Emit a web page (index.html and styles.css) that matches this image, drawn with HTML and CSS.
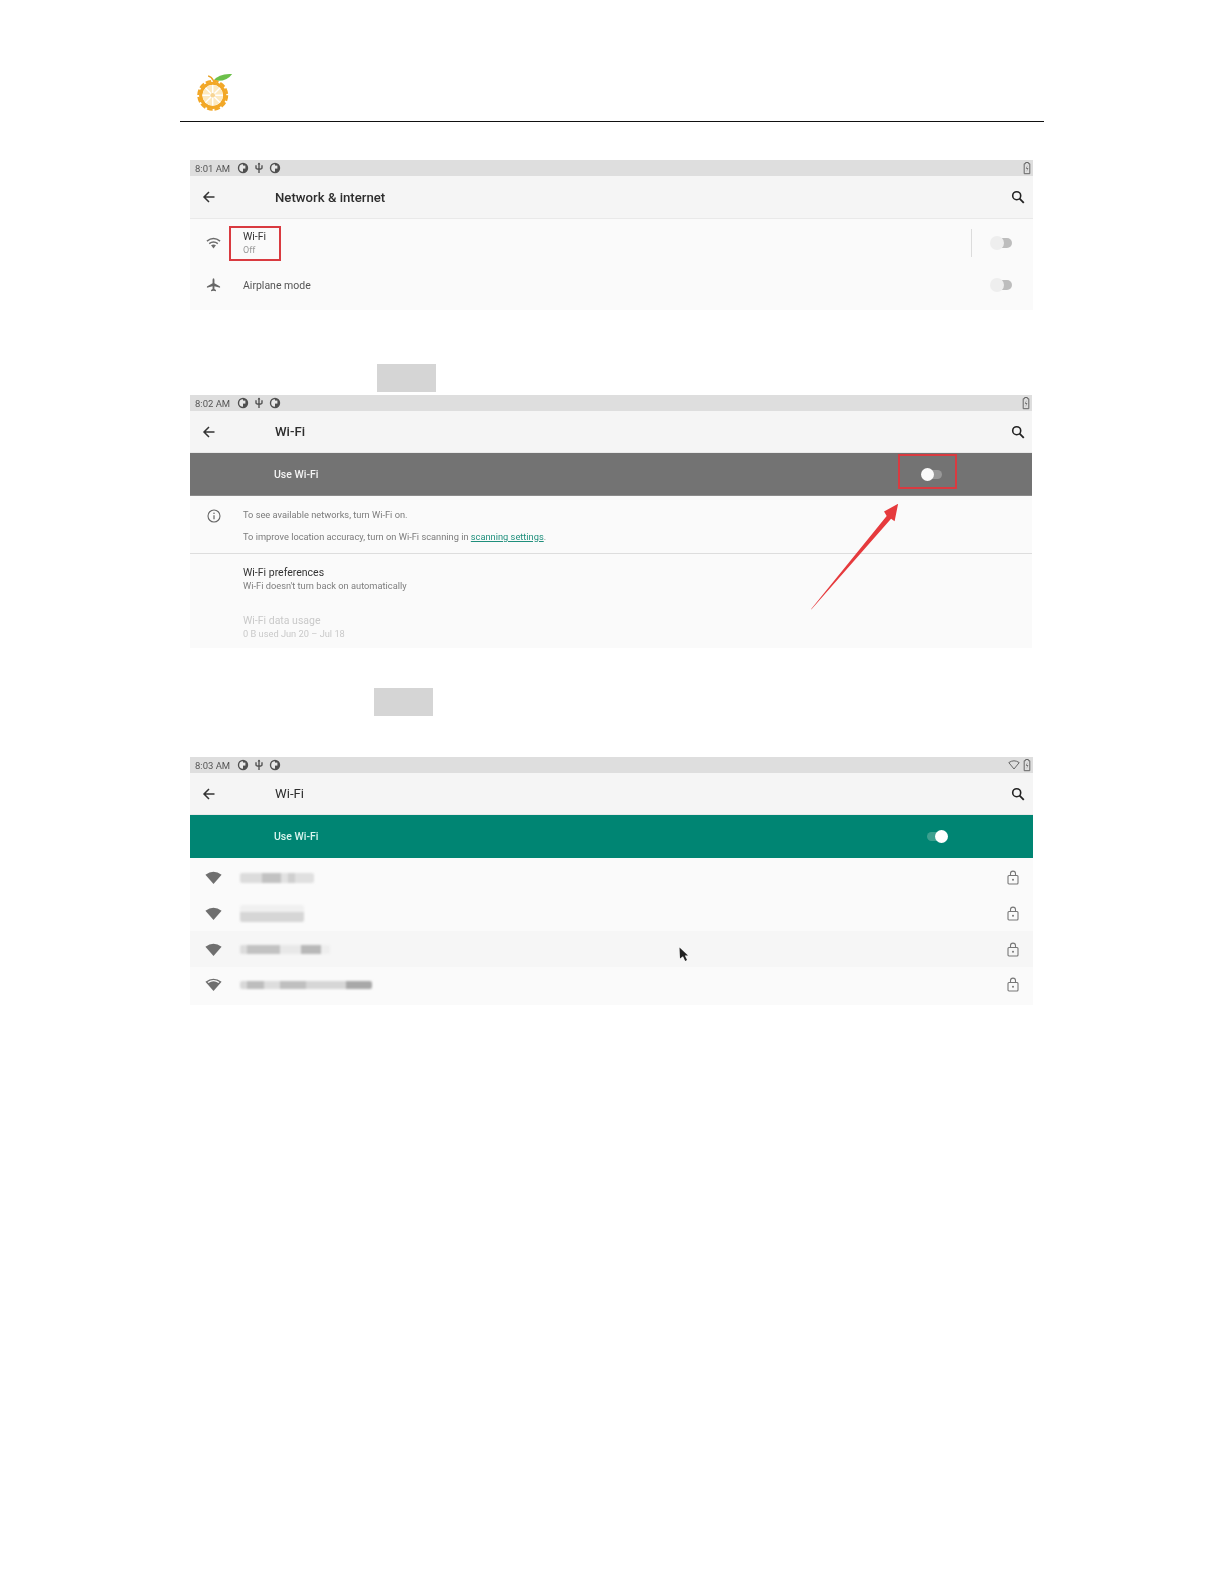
FILE: index.html
```html
<!DOCTYPE html>
<html lang="en">
<head>
<meta charset="utf-8">
<title>Wi-Fi setup</title>
<link rel="stylesheet" href="styles.css">
</head>
<body>
<svg class="defs" aria-hidden="true">
  <symbol id="i-sync" viewBox="0 0 12 12"><circle cx="6" cy="6" r="5.200" fill="#505050"/><path d="M6 2.200a3.800 3.800 0 0 0 0 7.600z" fill="#e8e8e8"/><rect x="6" y="3.600" width="2.400" height="3" fill="#e8e8e8"/></symbol>
  <symbol id="i-usb" viewBox="0 0 12 12"><path d="M6 1v10M3 3.200v2.600q0 1.400 3 1.600 3-.2 3-1.600V3.200" fill="none" stroke="#555" stroke-width="1.400"/><path d="M4.600 2.400 6 .6l1.400 1.800z" fill="#555"/></symbol>
  <symbol id="i-batt" viewBox="0 0 10 14"><path d="M3.600 1.500h2.800v1.200h1.400v10H2.200v-10h1.400z" fill="none" stroke="#666" stroke-width="1"/><path d="M5.600 4 3.800 7.800h1.600L4.400 11l2-4H4.800z" fill="#666"/></symbol>
  <symbol id="i-back" viewBox="0 0 14 14"><path d="M12.500 7H2M7 2 2 7l5 5" fill="none" stroke="#333" stroke-width="1.500"/></symbol>
  <symbol id="i-search" viewBox="0 0 14 14"><circle cx="5.700" cy="5.700" r="4" fill="none" stroke="#222" stroke-width="1.600"/><path d="m8.600 8.600 4.200 4.200" stroke="#222" stroke-width="1.800"/></symbol>
  <symbol id="i-wifi" viewBox="0 0 16 12"><path d="M1 4q7-5.400 14 0M3.400 6.600q4.600-3.400 9.200 0" fill="none" stroke="#6c6c6c" stroke-width="1.600"/><path d="M5.400 8.400q2.600-1.700 5.200 0L8 11.800z" fill="#6c6c6c"/></symbol>
  <symbol id="i-wifi-full" viewBox="0 0 16 12"><path d="M.4 3.400Q8-2.400 15.600 3.400L8 12z" fill="#6f6f6f"/></symbol>
  <symbol id="i-wifi-mid" viewBox="0 0 16 12"><path d="M.4 3.400Q8-2.400 15.600 3.400L8 12z" fill="#6f6f6f"/><path d="M2.400 3.700Q8-.4 13.600 3.700l-.9 1Q8 1.400 3.300 4.700z" fill="#fafafa"/></symbol>
  <symbol id="i-wifi-line" viewBox="0 0 12 10"><path d="M.8 2.600Q6-1 11.200 2.600L6 9z" fill="none" stroke="#666" stroke-width="1"/></symbol>
  <symbol id="i-plane" viewBox="0 0 16 16"><path d="M8 .8q1 0 1 1.800v3.600l6 3.400v1.400l-6-1.800v3l1.600 1.200v1.200L8 14l-2.600.6v-1.200L7 12.200v-3L1 11V9.600l6-3.400V2.600Q7 .8 8 .8z" fill="#666"/></symbol>
  <symbol id="i-info" viewBox="0 0 14 14"><circle cx="7" cy="7" r="6" fill="none" stroke="#666" stroke-width="1.100"/><path d="M7 6.200v4" stroke="#666" stroke-width="1.200"/><circle cx="7" cy="4.300" r=".8" fill="#666"/></symbol>
  <symbol id="i-lock" viewBox="0 0 12 15"><rect x="1" y="5.500" width="10" height="8.500" rx="1" fill="none" stroke="#777" stroke-width="1.100"/><path d="M3.500 5.500V3.600a2.500 2.500 0 0 1 5 0v1.900" fill="none" stroke="#777" stroke-width="1.100"/><circle cx="6" cy="9.800" r="1" fill="#777"/></symbol>
</svg>

<main class="page">
  <header class="doc-head">
    <svg class="logo" viewBox="0 0 40 42" aria-label="Orange Pi logo">
      <path d="M18 8Q24 0 38 1 32 10 18 8z" fill="#6cc04a"/>
      <path d="M12 3q4 1 5.500 5" fill="none" stroke="#e8a020" stroke-width="1.600"/>
      <circle cx="17" cy="24" r="15.500" fill="none" stroke="#f2a726" stroke-width="2.500" stroke-dasharray="6 2.100"/>
      <circle cx="17" cy="24" r="13" fill="none" stroke="#f2a726" stroke-width="3.500"/>
      <circle cx="17" cy="24" r="11" fill="#fde9c0"/>
      <path d="M17 13v22M6 24h22M9.200 16.200l15.600 15.600M24.800 16.200 9.200 31.800" stroke="#fff" stroke-width="1.500"/>
      <circle cx="17" cy="24" r="2.500" fill="#f8d594"/>
    </svg>
  </header>

  <section class="shot shot-first">
    <div class="status">
      <span class="clock">8:01 AM</span>
      <svg class="st-icon"><use href="#i-sync"/></svg>
      <svg class="st-icon"><use href="#i-usb"/></svg>
      <svg class="st-icon"><use href="#i-sync"/></svg>
      <span class="grow"></span>
      <svg class="st-batt"><use href="#i-batt"/></svg>
    </div>
    <div class="appbar appbar-tall">
      <svg class="back"><use href="#i-back"/></svg>
      <span class="title">Network &amp; internet</span>
      <svg class="search"><use href="#i-search"/></svg>
    </div>
    <div class="body net-body">
      <div class="net-row net-wifi">
        <svg class="lead lead-wifi"><use href="#i-wifi"/></svg>
        <div class="net-text"><div class="item">Wi-Fi</div><div class="sub-light">Off</div></div>
        <span class="vline"></span>
        <span class="toggle-off"><i></i></span>
      </div>
      <div class="net-row net-air">
        <svg class="lead lead-plane"><use href="#i-plane"/></svg>
        <div class="net-text"><div class="item item-soft">Airplane mode</div></div>
        <span class="toggle-off"><i></i></span>
      </div>
    </div>
    <span class="mark mark-wifi"></span>
  </section>

  <div class="redact redact-a"></div>

  <section class="shot shot-second">
    <div class="status">
      <span class="clock">8:02 AM</span>
      <svg class="st-icon"><use href="#i-sync"/></svg>
      <svg class="st-icon"><use href="#i-usb"/></svg>
      <svg class="st-icon"><use href="#i-sync"/></svg>
      <span class="grow"></span>
      <svg class="st-batt"><use href="#i-batt"/></svg>
    </div>
    <div class="appbar">
      <svg class="back"><use href="#i-back"/></svg>
      <span class="title">Wi-Fi</span>
      <svg class="search"><use href="#i-search"/></svg>
    </div>
    <div class="band band-off">
      <span class="band-label">Use Wi-Fi</span>
      <span class="band-toggle band-toggle-off"><i></i></span>
    </div>
    <div class="body">
      <div class="info">
        <svg class="info-icon"><use href="#i-info"/></svg>
        <div class="info-text">
          <p>To see available networks, turn Wi-Fi on.</p>
          <p>To improve location accuracy, turn on Wi-Fi scanning in <a href="#scan">scanning settings</a>.</p>
        </div>
      </div>
      <div class="pref">
        <div class="item">Wi-Fi preferences</div>
        <div class="sub">Wi-Fi doesn't turn back on automatically</div>
      </div>
      <div class="pref pref-off">
        <div class="item">Wi-Fi data usage</div>
        <div class="sub">0 B used Jun 20 – Jul 18</div>
      </div>
    </div>
    <span class="mark mark-toggle"></span>
    <svg class="arrow" viewBox="0 0 100 120" aria-hidden="true"><path d="M0 120 86 14 83 9 99 0 95 20 91 17 .6 120z" fill="#e63a3d"/></svg>
  </section>

  <div class="redact redact-b"></div>

  <section class="shot shot-third">
    <div class="status">
      <span class="clock">8:03 AM</span>
      <svg class="st-icon"><use href="#i-sync"/></svg>
      <svg class="st-icon"><use href="#i-usb"/></svg>
      <svg class="st-icon"><use href="#i-sync"/></svg>
      <span class="grow"></span>
      <svg class="st-wifi"><use href="#i-wifi-line"/></svg>
      <svg class="st-batt"><use href="#i-batt"/></svg>
    </div>
    <div class="appbar">
      <svg class="back"><use href="#i-back"/></svg>
      <span class="title title-light">Wi-Fi</span>
      <svg class="search"><use href="#i-search"/></svg>
    </div>
    <div class="band band-on">
      <span class="band-label">Use Wi-Fi</span>
      <span class="band-toggle band-toggle-on"><i></i></span>
    </div>
    <div class="body">
      <div class="ap"><svg class="ap-icon"><use href="#i-wifi-full"/></svg><span class="blob blob-1"></span><svg class="lock"><use href="#i-lock"/></svg></div>
      <div class="ap"><svg class="ap-icon"><use href="#i-wifi-full"/></svg><span class="blob blob-2"></span><svg class="lock"><use href="#i-lock"/></svg></div>
      <div class="ap ap-hover"><svg class="ap-icon"><use href="#i-wifi-full"/></svg><span class="blob blob-3"></span><svg class="lock"><use href="#i-lock"/></svg></div>
      <div class="ap"><svg class="ap-icon"><use href="#i-wifi-mid"/></svg><span class="blob blob-4"></span><svg class="lock"><use href="#i-lock"/></svg></div>
    </div>
    <svg class="cursor" viewBox="0 0 10 15" aria-hidden="true"><path d="M.5.500 9 8.500H5.800L8 13l-1.800 1L4 9.300 1 11.500z" fill="#222"/></svg>
  </section>
</main>
</body>
</html>
```
FILE: styles.css
```css
* { box-sizing: border-box; }
html, body { margin: 0; background: #fff; }
body { font-family: Roboto, "Liberation Sans", sans-serif; color: #333; height: 1584px; overflow: hidden; }
p { margin: 0; }
.defs { position: absolute; width: 0; height: 0; }

.page { width: 864px; margin-left: 180px; padding-top: 73px; }
.doc-head { height: 49px; border-bottom: 1px solid #111; padding-left: 17px; }
.logo { display: block; width: 37px; height: 39px; }

.shot { position: relative; margin: 38px 0 0 10px; width: 843px; display: flex; flex-direction: column; background: #fafafa; filter: blur(.45px); }
.shot-first { height: 150px; }
.shot-second { height: 252px; margin-top: 3px; width: 842px; }
.shot-third { height: 248px; margin-top: 41px; }

.status { height: 16px; flex: none; background: #dedede; display: flex; align-items: center; padding: 0 1px 0 5px; font-size: 9.500px; color: #555; }
.clock { width: 42px; }
.st-icon { width: 12px; height: 12px; margin-right: 4px; }
.grow { flex: 1; }
.st-batt { width: 10px; height: 14px; }
.st-wifi { width: 12px; height: 10px; margin-right: 2px; }

.appbar { height: 42px; flex: none; background: #f5f5f5; border-bottom: 1px solid #e9e9e9; display: flex; align-items: center; padding: 0 8px 0 12px; }
.shot-second .appbar { padding-right: 7px; }
.appbar-tall { height: 43px; }
.back { width: 14px; height: 14px; }
.title { flex: 1; margin-left: 59px; font-size: 13.200px; font-weight: 500; color: #2d2d2d; }
.title-light { font-weight: 400; }
.search { width: 14px; height: 14px; }

.body { flex: 1; background: #fafafa; }

.net-body { display: flex; flex-direction: column; padding-top: 3px; }
.net-row { display: flex; align-items: center; padding-right: 21px; }
.net-wifi { height: 42px; }
.net-air { height: 42px; }
.lead { flex: none; margin-left: 16px; }
.lead-wifi { width: 15px; height: 12px; }
.lead-plane { width: 15px; height: 16px; }
.net-text { flex: 1; margin-left: 22px; }
.item { font-size: 10.500px; line-height: 13px; color: #333; }
.item-soft { color: #555; }
.sub-light { font-size: 9px; line-height: 14px; color: #999; }
.vline { width: 1px; height: 28px; background: #dcdcdc; margin-right: 18px; }
.toggle-off { position: relative; display: block; width: 22px; height: 14px; }
.toggle-off::before { content: ""; position: absolute; left: 6px; top: 2px; width: 16px; height: 10px; border-radius: 5px; background: #bdbdbd; }
.toggle-off i { position: absolute; left: 0; top: 0; width: 14px; height: 14px; border-radius: 50%; background: #eeeeee; }

.band { height: 42.500px; flex: none; display: flex; align-items: center; padding-top: 1px; color: #f4f4f4; position: relative; }
.band-off { background: #737373; border-bottom: 1px solid #8a8a8a; }
.band-on { background: #008573; color: #d9f5ee; }
.band-label { margin-left: 84px; font-size: 10.500px; font-weight: 500; }
.band-toggle { position: absolute; display: block; width: 22px; height: 13px; top: 15px; }
.band-toggle i { position: absolute; top: 0; width: 13px; height: 13px; border-radius: 50%; background: #fafafa; }
.band-toggle-off { left: 731px; }
.band-toggle-off::before { content: ""; position: absolute; left: 6px; top: 2px; width: 15px; height: 9px; border-radius: 5px; background: #989898; }
.band-toggle-off i { left: 0; }
.band-toggle-on { left: 737px; }
.band-toggle-on::before { content: ""; position: absolute; left: 0; top: 2px; width: 15px; height: 9px; border-radius: 5px; background: #3da08f; }
.band-toggle-on i { left: 8px; background: #fff; }

.info { height: 58px; display: flex; border-bottom: 1px solid #dddddd; padding: 13px 0 0 17px; }
.info-icon { width: 14px; height: 14px; flex: none; }
.info-text { margin-left: 22px; font-size: 9.280px; line-height: 11px; color: #7b7b7b; display: flex; flex-direction: column; gap: 11px; }
.info-text a { color: #1f8f7c; text-decoration: underline; }

.pref { padding: 12px 0 0 53px; height: 48px; }
.pref .item { font-size: 10.500px; line-height: 13px; }
.sub { font-size: 9.280px; line-height: 13px; color: #7d7d7d; }
.pref-off { height: 46px; padding-top: 12px; }
.pref-off .item, .pref-off .sub { color: #c9c9c9; }

.ap { height: 35.700px; display: flex; align-items: center; padding: 0 14px 0 15px; }
.ap:first-child { margin-top: 2.500px; }
.ap-hover { background: #f6f6f6; }
.ap-icon { width: 17px; height: 13px; flex: none; }
.blob { display: block; margin-left: 18px; border-radius: 2px; filter: blur(1px); }
.lock { width: 12px; height: 15px; margin-left: auto; flex: none; }
.blob-1 { width: 74px; height: 10px; background: linear-gradient(90deg, #dcdcdc 0 30%, #c2c2c2 30% 55%, #e2e2e2 55% 65%, #cfcfcf 65% 75%, #e0e0e0 75%); }
.blob-2 { width: 64px; height: 17px; background: linear-gradient(180deg, #f0f0f0 0 40%, #d6d6d6 40%); }
.blob-3 { width: 90px; height: 9px; background: linear-gradient(90deg, #dcdcdc 0 8%, #c2c2c2 8% 45%, #e8e8e8 45% 68%, #b8b8b8 68% 90%, #eeeeee 90%); }
.blob-4 { width: 132px; height: 8px; background: linear-gradient(90deg, #d8d8d8 0 5%, #bdbdbd 5% 18%, #dddddd 18% 30%, #bfbfbf 30% 50%, #d6d6d6 50% 80%, #a8a8a8 80%); }

.redact { background: #d5d5d5; height: 28px; width: 59px; margin-top: 54px; }
.redact-a { margin-left: 197px; }
.redact-b { margin-left: 194px; margin-top: 41px; }

.mark { position: absolute; border: 2px solid #d93a40; }
.mark-wifi { left: 39px; top: 66px; width: 52px; height: 35px; }
.mark-toggle { left: 708px; top: 59px; width: 59px; height: 35px; }
.arrow { position: absolute; left: 621px; top: 105px; width: 88px; height: 113px; }
.cursor { position: absolute; left: 489px; top: 190px; width: 10px; height: 15px; }
```
